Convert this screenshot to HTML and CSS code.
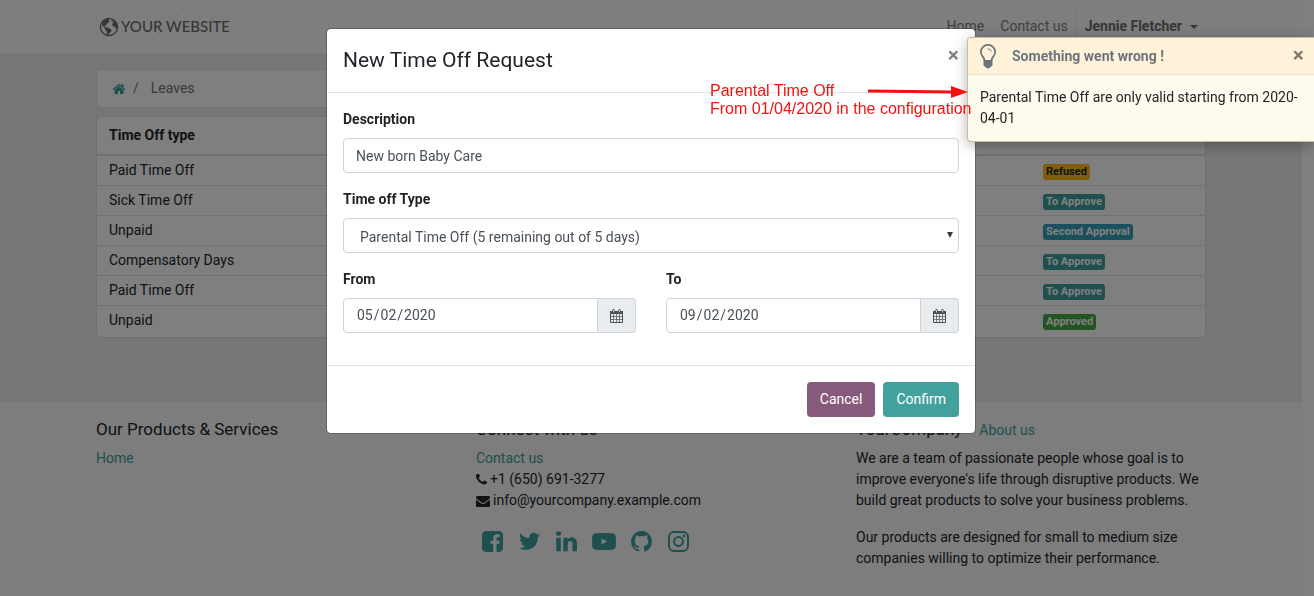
FILE: index.html
```html
<!DOCTYPE html>
<html lang="en">
<head>
<meta charset="utf-8">
<title>Leaves | Your Website</title>
<link rel="stylesheet" href="styles.css">
</head>
<body>
<div class="page">
  <header class="site-header">
    <div class="container header-row">
      <a class="logo" href="#">
        <svg class="logo-globe" viewBox="0 0 20 20" aria-hidden="true"><circle cx="10" cy="10" r="8.6" fill="none" stroke="currentColor" stroke-width="1.3"/><path fill="currentColor" d="M3.2 5.2 6 2.6l2.2-.8 2 .3-.5 1.3 1.2.8-1.6 1.6-1.2.5-.6 1.6-1.4.4-.5 1.2 1.6.9 1.3.2 2.3 1.2 1.8 1.2-.7 2-1.5.9-.9 1.9-1 .8-.6-2.3-.2-2.2-1.4-1.2-.5-1.8L4.300 9.500 3 8.200zM12.600 2.200l3 1.500 2 2.700 1 3-.6 2.600-1.300-.4-.5-1.800-1.800-.3-1.200-1.500.5-1.900 1.300-.8-.8-.9-1.300.2-.3-1.300z"/></svg>
        <span>YOUR WEBSITE</span>
      </a>
      <nav class="nav">
        <a href="#">Home</a>
        <a href="#">Contact us</a>
        <button class="user-menu" type="button">Jennie Fletcher<span class="caret"></span></button>
      </nav>
    </div>
  </header>
  <main class="main">
    <div class="container">
      <nav class="breadcrumb" aria-label="Breadcrumb">
        <a href="#" aria-label="Home"><svg class="home-icon" viewBox="0 0 1792 1792"><path fill="currentColor" d="M1472 992v480q0 26-19 45t-45 19h-384v-384h-256v384h-384q-26 0-45-19t-19-45v-480q0-1 .5-3t.5-3l575-474 575 474q1 2 1 6zm223-69l-62 74q-8 9-21 11h-3q-13 0-21-7l-692-577-692 577q-12 8-24 7-13-2-21-11l-62-74q-8-10-7-23.5t11-21.500l719-599q32-26 76-26t76 26l244 204v-195q0-14 9-23t23-9h192q14 0 23 9t9 23v408l219 182q10 8 11 21.500t-7 23.500z"/></svg></a>
        <span>/</span>
        <span class="crumb">Leaves</span>
      </nav>
      <div class="table-card">
        <table class="leaves">
          <thead><tr><th>Time Off type</th><th class="status">Status</th></tr></thead>
          <tbody>
            <tr><td>Paid Time Off</td><td class="status"><span class="badge refused">Refused</span></td></tr>
            <tr><td>Sick Time Off</td><td class="status"><span class="badge pending">To Approve</span></td></tr>
            <tr><td>Unpaid</td><td class="status"><span class="badge second">Second Approval</span></td></tr>
            <tr><td>Compensatory Days</td><td class="status"><span class="badge pending">To Approve</span></td></tr>
            <tr><td>Paid Time Off</td><td class="status"><span class="badge pending">To Approve</span></td></tr>
            <tr><td>Unpaid</td><td class="status"><span class="badge approved">Approved</span></td></tr>
          </tbody>
        </table>
      </div>
    </div>
  </main>
  <footer class="footer">
    <div class="container footer-grid">
      <section>
        <h5>Our Products &amp; Services</h5>
        <a href="#">Home</a>
      </section>
      <section>
        <h5>Connect with us</h5>
        <a href="#">Contact us</a>
        <div class="contact"><svg class="phone-icon" viewBox="192 192 1408 1408"><path fill="currentColor" d="M1600 1240q0 27-10 70.500t-21 68.500q-21 50-122 106-94 51-186 51-27 0-53-3.500t-57.500-12.500-47-14.500-55.500-20.500-49-18q-98-35-175-83-127-79-264-216t-216-264q-48-77-83-175-3-9-18-49t-20.500-55.500-14.500-47-12.500-57.500-3.500-53q0-92 51-186 56-101 106-122 25-11 68.500-21t70.500-10q14 0 21 3 18 6 53 76 11 19 30 54t35 63.500 31 53.500q3 4 17.500 25t21.500 35.500 7 28.500q0 20-28.500 50t-62 55-62 53-28.500 46q0 9 5 22.500t8.500 20.500 14 24 11.500 19q76 137 174 235t235 174q2 1 19 11.500t24 14 20.500 8.500 22.500 5q18 0 46-28.500t53-62 55-62 50-28.500q14 0 28.500 7t35.500 21.500 25 17.500q25 15 53.500 31t63.500 35 54 30q70 35 76 53 3 7 3 21z"/></svg>+1 (650) 691-3277</div>
        <div class="contact"><svg class="mail-icon" viewBox="0 0 1792 1792"><path fill="currentColor" d="M1792 710v794q0 66-47 113t-113 47h-1472q-66 0-113-47t-47-113v-794q44 49 101 87 362 246 497 345 57 42 92.500 65.500t94.500 48 110 24.500h2q51 0 110-24.500t94.500-48 92.500-65.500q170-123 498-345 57-39 100-87zm0-294q0 79-49 151t-122 123q-376 261-468 325-10 7-42.500 31t-54 38.500-52 32.500-57.500 27-50 9h-2q-23 0-50-9t-57.500-27-52-32.500-54-38.500-42.500-31q-91-64-262-182.500t-205-142.500q-62-42-117-115.500t-55-136.500q0-78 41.500-130t118.500-52h1472q65 0 112.500 47t47.500 113z"/></svg>info@yourcompany.example.com</div>
        <div class="social">
          <a href="#" aria-label="Facebook"><svg viewBox="128 128 1536 1536"><path fill="currentColor" d="M1376 128q119 0 203.500 84.500t84.500 203.500v960q0 119-84.500 203.500t-203.500 84.500h-188v-595h199l30-232h-229v-148q0-56 23.500-84t91.500-28l122-1v-207q-63-9-178-9-136 0-217.500 80t-81.500 226v171h-200v232h200v595h-532q-119 0-203.500-84.500t-84.500-203.500v-960q0-119 84.500-203.500t203.500-84.500h960z"/></svg></a>
          <a href="#" aria-label="Twitter"><svg viewBox="108 140 1576 1536"><path fill="currentColor" d="M1684 408q-67 98-162 167 1 14 1 42 0 130-38 259.500t-115.500 248.500-184.500 210.500-258 146-323 54.500q-271 0-496-145 35 4 78 4 225 0 401-138-105-2-188-64.500t-114-159.500q33 5 61 5 43 0 85-11-112-23-185.500-111.500t-73.500-205.500v-4q68 38 146 41-66-44-105-115t-39-154q0-88 44-163 121 149 294.500 238.500t371.500 99.500q-8-38-8-74 0-134 94.500-228.500t228.500-94.500q140 0 236 102 109-21 205-78-37 115-142 178 93-10 186-50z"/></svg></a>
          <a href="#" aria-label="LinkedIn"><svg viewBox="128 138 1536 1536"><path fill="currentColor" d="M477 625v991h-330v-991h330zm21-306q1 73-50.500 122t-135.500 49h-2q-82 0-132-49t-50-122q0-74 51.500-122.500t134.500-48.500 133 48.500 51 122.500zm1166 729v568h-329v-530q0-105-40.500-164.500t-126.500-59.500q-63 0-105.500 34.500t-63.500 85.500q-11 30-11 81v553h-329q2-399 2-647t-1-296l-1-48h329v144h-2q20-32 41-56t56.500-52 87-43.500 114.500-15.500q171 0 275 113.500t104 332.500z"/></svg></a>
          <a class="wide" href="#" aria-label="YouTube"><svg viewBox="0 0 24 21"><path fill="currentColor" fill-rule="evenodd" d="M4 2.300q8-.6 16 0 3.300.2 3.700 3.400.5 4.800 0 9.600-.4 3.200-3.700 3.400-8 .6-16 0-3.300-.2-3.700-3.400-.5-4.800 0-9.600Q.7 2.500 4 2.300zM9.500 7.500v6l5.500-3z"/></svg></a>
          <a href="#" aria-label="GitHub"><svg viewBox="128 128 1536 1536"><path fill="currentColor" d="M896 128q209 0 385.500 103t279.500 279.500 103 385.500q0 251-146.500 451.500t-378.500 277.500q-27 5-40-7t-13-30q0-3 .5-76.500t.5-134.500q0-97-52-142 57-6 102.500-18t94-39 81-66.500 53-105 20.500-150.500q0-119-79-206 37-91-8-204-28-9-81 11t-92 44l-38 24q-93-26-192-26t-192 26q-16-11-42.500-27t-83.500-38.500-85-13.500q-45 113-8 204-79 87-79 206 0 85 20.500 150t52.500 105 80.500 67 94 39 102.500 18q-39 36-49 103-21 10-45 15t-57 5-65.500-21.500-55.500-62.500q-19-32-48.500-52t-49.500-24l-20-3q-21 0-29 4.500t-5 11.500 9 14 13 12l7 5q22 10 43.500 38t31.500 51l10 23q13 38 44 61.500t67 30 69.500 7 55.500-3.500l23-4q0 38 .5 88.500t.5 54.500q0 18-13 30t-40 7q-232-77-378.500-277.500t-146.500-451.500q0-209 103-385.500t279.500-279.500 385.500-103z"/></svg></a>
          <a href="#" aria-label="Instagram"><svg viewBox="0 0 21 21" fill="none" stroke="currentColor" stroke-width="2"><rect x="1" y="1" width="19" height="19" rx="5"/><circle cx="10.500" cy="10.500" r="4.400"/><circle cx="16.100" cy="4.900" r="1.300" fill="currentColor" stroke="none"/></svg></a>
        </div>
      </section>
      <section>
        <h5>YourCompany <small>– <a href="#">About us</a></small></h5>
        <p>We are a team of passionate people whose goal is to improve everyone's life through disruptive products. We build great products to solve your business problems.</p>
        <p>Our products are designed for small to medium size companies willing to optimize their performance.</p>
      </section>
    </div>
  </footer>
</div>

<div class="backdrop">
  <form class="modal" role="dialog" aria-labelledby="modal-title">
    <div class="modal-header">
      <h4 id="modal-title">New Time Off Request</h4>
      <button class="close" type="button" aria-label="Close">×</button>
    </div>
    <div class="modal-body">
      <div class="field">
        <label for="description">Description</label>
        <input class="control" id="description" type="text" value="New born Baby Care">
      </div>
      <div class="field">
        <label for="type">Time off Type</label>
        <div class="select-wrap">
          <select class="control" id="type"><option>Parental Time Off (5 remaining out of 5 days)</option></select>
          <svg class="select-arrow" viewBox="0 0 6 6" aria-hidden="true"><path fill="currentColor" d="M0 0h6L3 6z"/></svg>
        </div>
      </div>
      <div class="date-row">
        <div class="field">
          <label for="from">From</label>
          <div class="input-group">
            <input class="control" id="from" type="date" value="2020-05-02">
            <span class="addon"><svg viewBox="0 0 13 14" aria-hidden="true"><path fill="none" stroke="currentColor" d="M.5 2.500h12v11H.5z"/><path fill="none" stroke="currentColor" stroke-width=".7" d="M1 7.500h11M1 10.500h11M3.500 5v8M6.500 5v8M9.500 5v8"/><path fill="currentColor" d="M0 2h13v3H0z"/><path d="M3.500 1.200v2.300M9.500 1.200v2.300" stroke="currentColor" stroke-width="2.200" stroke-linecap="round"/><path d="M3.500 1v2.400M9.500 1v2.400" stroke="#e9ecef" stroke-width=".8"/></svg></span>
          </div>
        </div>
        <div class="field">
          <label for="to">To</label>
          <div class="input-group">
            <input class="control" id="to" type="date" value="2020-09-02">
            <span class="addon"><svg viewBox="0 0 13 14" aria-hidden="true"><path fill="none" stroke="currentColor" d="M.5 2.500h12v11H.5z"/><path fill="none" stroke="currentColor" stroke-width=".7" d="M1 7.500h11M1 10.500h11M3.500 5v8M6.500 5v8M9.500 5v8"/><path fill="currentColor" d="M0 2h13v3H0z"/><path d="M3.500 1.200v2.300M9.500 1.200v2.300" stroke="currentColor" stroke-width="2.200" stroke-linecap="round"/><path d="M3.500 1v2.400M9.500 1v2.400" stroke="#e9ecef" stroke-width=".8"/></svg></span>
          </div>
        </div>
      </div>
    </div>
    <div class="modal-footer">
      <button class="btn cancel" type="button">Cancel</button>
      <button class="btn confirm" type="button">Confirm</button>
    </div>
  </form>
</div>

<aside class="toast" role="alert">
  <div class="toast-header">
    <svg class="bulb" viewBox="0 0 16 25" aria-hidden="true"><path fill="none" stroke="currentColor" stroke-width="1.800" d="M4.700 17Q4.500 14.500 2.600 12.300.900 10.200.900 7.700C.9 3.700 4.200.9 8 .9s7.100 2.800 7.100 6.800q0 2.500-1.700 4.600-1.900 2.200-2.100 4.700"/><path fill="none" stroke="currentColor" stroke-linecap="round" d="M8 4.800q2.700.1 3.200 2.400"/><path fill="currentColor" d="M3.500 16h9v5q0 1.300-1.700 1.800-.8 1.700-2.800 1.700t-2.800-1.700Q3.500 22.300 3.500 21z"/></svg>
    <strong>Something went wrong !</strong>
    <button class="close" type="button" aria-label="Dismiss">×</button>
  </div>
  <p class="toast-body">Parental Time Off are only valid starting from 2020-04-01</p>
</aside>

<div class="note">Parental Time Off<br>From 01/04/2020 in the configuration
  <svg class="note-arrow" viewBox="0 0 102 14" aria-hidden="true"><path stroke="currentColor" stroke-width="3" d="M1 6l84 1"/><path fill="currentColor" d="M84 1l17 6-17 6z"/></svg>
</div>
</body>
</html>
```
FILE: styles.css
```css
* { box-sizing: border-box; }
body {
  margin: 0;
  min-height: 100vh;
  overflow: hidden;
  background: #fff;
  color: #212529;
  font: 14px/21px Roboto, "Liberation Sans", sans-serif;
}
a { color: #3aa09d; text-decoration: none; }
button, input, select { font: inherit; }
svg { display: block; flex: none; }
h4, h5, p { margin: 0; }

.page { margin-right: 12px; }
.container { max-width: 1140px; margin: 0 auto; padding: 0 15px; }

.site-header { background: #fdfdfd; }
.header-row { display: flex; justify-content: space-between; align-items: center; height: 53px; }
.logo {
  display: flex;
  align-items: center;
  gap: 2px;
  height: 37px;
  padding: 0 1px 0 3px;
  color: #6c6c6c;
  font: 500 15px/37px Lato, sans-serif;
  background: repeating-linear-gradient(135deg, transparent 0 8px, #f3f3f3 8px 9px);
}
.logo-globe { width: 20px; height: 20px; }
.nav { display: flex; align-items: center; }
.nav a { padding: 0 8px; color: #7f7f7f; }
.user-menu {
  display: flex;
  align-items: center;
  gap: 8px;
  height: 37px;
  padding: 0 8px;
  border: 0;
  border-left: 1px solid #eee;
  background: none;
  color: #6c6c6c;
  font-weight: 700;
}
.caret { border: 4px solid transparent; border-top-color: currentColor; border-bottom: 0; }

.main { padding: 16px 0 64px; background: #ececec; }
.breadcrumb {
  display: flex;
  align-items: center;
  gap: 7px;
  margin-bottom: 8px;
  padding: 8px 15px;
  border: 1px solid #e4e4e4;
  border-radius: 4px;
  background: #fff;
  color: #6c757d;
}
.home-icon { width: 14px; height: 14px; }
.crumb { padding-left: 5px; }
.table-card { padding-bottom: 2px; border: 1px solid #e2e2e2; border-radius: 4px; background: #fff; }
.leaves { width: 100%; border-spacing: 0; }
.leaves th { padding: 8px 12px; border-bottom: 2px solid #dee2e6; text-align: left; }
.leaves td { padding: 4px 12px; border-top: 1px solid #dee2e6; }
.leaves tbody tr:first-child td { border-top: 0; }
.leaves .status { width: 174px; }
.badge {
  display: inline-block;
  padding: 3px;
  border-radius: 3px;
  color: #fff;
  font-size: 11px;
  font-weight: 700;
  line-height: 10px;
}
.refused { background: #ffbc1c; color: #212529; }
.pending { background: #3e9f9c; }
.second { background: #35a0b8; }
.approved { background: #46a846; }

.footer { padding: 16px 0 26px; background: #fafafa; }
.footer-grid { display: grid; grid-template-columns: repeat(3, 1fr); gap: 30px; }
.footer h5 { margin-bottom: 8px; font-size: 17px; line-height: 22px; font-weight: 400; }
.footer small { font-size: 14px; line-height: 14px; }
.footer p + p { margin-top: 16px; }
.contact { display: flex; align-items: center; gap: 3px; }
.phone-icon { width: 11px; height: 11px; }
.mail-icon { width: 14px; height: 14px; }
.social { display: flex; gap: 16px; padding: 20px 6px 0; }
.social svg { width: 21px; height: 21px; }
.social .wide { margin: 0 -1px; }
.social .wide svg { width: 24px; }

.backdrop {
  position: fixed;
  inset: 0;
  padding: 28px 12px 0 0;
  background: rgba(0, 0, 0, .5);
}
.modal {
  max-width: 650px;
  margin: 0 auto;
  border: 1px solid rgba(0, 0, 0, .2);
  border-radius: 5px;
  background: #fff;
  background-clip: padding-box;
}
.modal-header {
  display: flex;
  justify-content: space-between;
  align-items: flex-start;
  padding: 16px;
  border-bottom: 1px solid #dee2e6;
}
.modal-header h4 { font-size: 21px; line-height: 31px; font-weight: 400; }
.close {
  padding: 0;
  border: 0;
  background: none;
  color: #000;
  font-size: 21px;
  line-height: 21px;
  font-weight: 700;
  opacity: .5;
}
.modal-body { padding: 16px; }
.field { margin-bottom: 16px; }
.field label { display: block; margin-bottom: 8px; font-weight: 700; }
.control {
  display: block;
  width: 100%;
  height: 35px;
  padding: 6px 12px;
  border: 1px solid #ced4da;
  border-radius: 4px;
  background: #fff;
  color: #495057;
}
.select-wrap { position: relative; }
.select-wrap .control { padding: 8px 16px 6px; appearance: none; }
.select-arrow {
  position: absolute;
  top: 14px;
  right: 6px;
  width: 6px;
  height: 6px;
  color: #343a40;
}
.date-row { display: grid; grid-template-columns: 1fr 1fr; gap: 30px; }
.input-group { display: flex; }
.input-group .control { flex: 1; min-width: 0; border-radius: 4px 0 0 4px; }
.control::-webkit-calendar-picker-indicator { display: none; }
.addon {
  display: flex;
  align-items: center;
  padding: 0 12px;
  border: 1px solid #ced4da;
  border-left: 0;
  border-radius: 0 4px 4px 0;
  background: #e9ecef;
  color: #495057;
}
.addon svg { width: 13px; height: 14px; }
.modal-footer {
  display: flex;
  justify-content: flex-end;
  gap: 8px;
  padding: 16px;
  border-top: 1px solid #dee2e6;
}
.btn { padding: 7px 13px; border: 0; border-radius: 4px; color: #fff; }
.cancel { background: #875a7b; }
.confirm { background: #42a09e; }

.toast {
  position: fixed;
  top: 37px;
  right: 0;
  width: 347px;
  border: 1px solid #c9bd9f;
  border-right: 0;
  border-radius: 4px 0 0 4px;
  background: #fffaee;
  box-shadow: 0 3px 14px rgba(0, 0, 0, .3);
}
.toast-header {
  display: flex;
  align-items: center;
  height: 37px;
  padding: 0 10px 0 12px;
  border-bottom: 1px solid #f0e3c8;
  border-radius: 3px 0 0;
  background: #fff2d9;
  color: #6c757d;
}
.toast-header strong { flex: 1; padding-left: 16px; }
.toast-header .close { padding-bottom: 2px; }
.toast-body { padding: 12px; }
.bulb { width: 16px; height: 25px; }

.note {
  position: fixed;
  top: 82px;
  left: 710px;
  color: #f5110f;
  font: 16px/18px "Liberation Sans", sans-serif;
  white-space: nowrap;
}
.note-arrow { position: absolute; top: 3px; left: 157px; width: 102px; height: 14px; }
```
